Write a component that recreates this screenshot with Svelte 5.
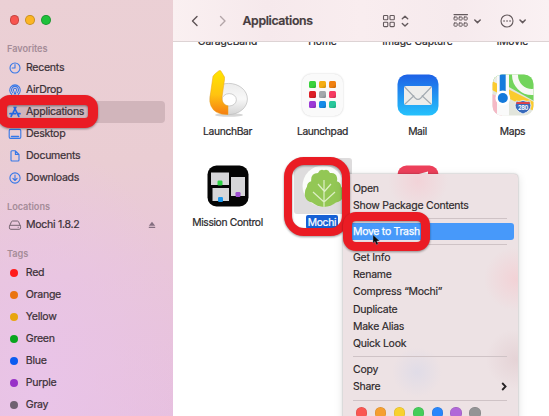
<script>
  const favorites = ['Recents', 'AirDrop', 'Applications', 'Desktop', 'Documents', 'Downloads'];
  const tags = [
    ['Red', '#ff1c1c'], ['Orange', '#ea7311'], ['Yellow', '#e8a50f'], ['Green', '#09a51e'],
    ['Blue', '#0b5cf0'], ['Purple', '#9832c8'], ['Gray', '#706171']
  ];
  const groups = [
    ['Open', 'Show Package Contents'],
    ['Move to Trash'],
    ['Get Info', 'Rename', 'Compress “Mochi”', 'Duplicate', 'Make Alias', 'Quick Look'],
    ['Copy', 'Share']
  ];
  const dots = ['#fa5752', '#f59f31', '#f8d12f', '#45cd5a', '#2986fb', '#b168d8', '#949496'];
  const pad = ['#3ad23c', '#f5ad12', '#f08010', '#dd1f27', '#a3a8ac', '#f53b62', '#9c3ad6', '#168be8', '#28c79b'];
</script>

<div class="window">
  <aside>
    <div class="lights"><i style="background:#f8544f"></i><i style="background:#fcb524"></i><i style="background:#1fc13b"></i></div>
    <h4>Favorites</h4>
    {#each favorites as name}
      <div class="row" class:active={name === 'Applications'}>
        <svg width="14" height="14" viewBox="0 0 14 14" fill="none" stroke="#3678e8" stroke-width="1.1" stroke-linecap="round" stroke-linejoin="round">
          {#if name === 'Recents'}
            <circle cx="7" cy="7" r="5" /><path d="M7 3.6V7H4.2" />
          {:else if name === 'AirDrop'}
            <path d="M3.7 11.3A5.3 5.3 0 1 1 10.3 11.3M4.9 9.7A3.5 3.5 0 1 1 9.1 9.7M5.8 8.2A1.7 1.7 0 1 1 8.2 8.2" /><path d="M7 7.6L5.5 11.6H8.5Z" fill="#3678e8" stroke="none" />
          {:else if name === 'Applications'}
            <path stroke="#2367e2" stroke-width="1.7" d="M6.2 2.3L10.8 11.4M7.8 2.3L5.2 7.4M3.9 9.8L3.1 11.4M2 8.7H7.4M9.6 8.7H12" />
          {:else if name === 'Desktop'}
            <rect x="1.2" y="2.4" width="11.6" height="9" rx="1.3" /><path d="M3.5 9.4H10.5" stroke-width="1.5" />
          {:else if name === 'Documents'}
            <path d="M3 2.8Q3 1.8 4 1.8H7.4L11 5.4V11Q11 12 10 12H4Q3 12 3 11ZM7.4 1.8V5.4H11" />
          {:else}
            <circle cx="7" cy="7" r="5.1" /><path d="M7 4.1V9.4M4.9 7.4L7 9.5L9.1 7.4" />
          {/if}
        </svg>
        <span>{name}</span>
      </div>
    {/each}
    <h4 class="loc">Locations</h4>
    <div class="row">
      <svg width="14" height="14" viewBox="0 0 14 14" fill="none" stroke="#756570" stroke-width="1"><path d="M1.5 8.2L3.5 3.6Q3.8 3 4.5 3H9.5Q10.2 3 10.5 3.6L12.5 8.2" /><rect x="1.4" y="7.3" width="11.2" height="4" rx="1.4" /><path d="M9.7 9.3H10.7" /></svg>
      <span>Mochi 1.8.2</span>
      <svg class="eject" width="8" height="8" viewBox="0 0 8 8" fill="#846f80"><path d="M4 .8L7.2 4.8H.8ZM.8 5.8H7.2V7H.8Z" /></svg>
    </div>
    <h4 class="tg">Tags</h4>
    {#each tags as [name, color]}
      <div class="row"><b class="tag" style="background:{color}"></b><span>{name}</span></div>
    {/each}
  </aside>

  <main>
    <header>
      <svg class="back" width="36" height="12" viewBox="0 0 36 12" fill="none" stroke-width="1.4" stroke-linecap="round" stroke-linejoin="round"><path d="M6 1.5L1.5 6L6 10.5" stroke="#5d5355" /><path d="M29.5 1.5L34 6L29.5 10.5" stroke="#b3a5a8" /></svg>
      <strong>Applications</strong>
      <svg class="tools" width="146" height="16" viewBox="0 0 146 16" fill="none" stroke="#645a5d" stroke-width="1.1" stroke-linecap="round" stroke-linejoin="round">
        <g><rect x="1.5" y="2.5" width="4.3" height="4.3" rx=".8" /><rect x="8" y="2.5" width="4.3" height="4.3" rx=".8" /><rect x="1.5" y="9.3" width="4.3" height="4.3" rx=".8" /><rect x="8" y="9.3" width="4.3" height="4.3" rx=".8" /></g>
        <path stroke-width="1.4" d="M20.3 5.8L23 3.2L25.7 5.8M20.3 10.4L23 13L25.7 10.4" />
        <path d="M72 1.6H85.5" />
        {#each [72, 77, 82] as x}
          <rect {x} y="4" width="3.2" height="3" rx=".7" stroke-width="1" /><rect {x} y="10" width="3.2" height="3.2" rx=".7" stroke-width="1" />
        {/each}
        <path stroke-width="1.5" d="M92.8 7L95.5 9.6L98.2 7M138 7L140.6 9.6L143.2 7" />
        <circle cx="125" cy="8" r="6" /><path d="M122 8H122.1M125 8H125.1M128 8H128.1" stroke-width="1.6" />
      </svg>
    </header>
    <div class="grid">
      <div class="partial"><span>GarageBand</span><span>Home</span><span>Image Capture</span><span>iMovie</span></div>
      <div class="apps">
        <div class="app">
          <svg width="48" height="50" viewBox="0 0 48 50">
            <defs>
              <linearGradient id="bar" x2="0" y2="1"><stop stop-color="#ffe500" /><stop offset=".55" stop-color="#ffc311" /><stop offset="1" stop-color="#f57d12" /></linearGradient>
              <linearGradient id="ring" x2="0" y2="1"><stop stop-color="#ececec" /><stop offset=".5" stop-color="#f8f8f8" /><stop offset="1" stop-color="#d4d4d4" /></linearGradient>
            </defs>
            <ellipse cx="25" cy="47" rx="14" ry="1.8" fill="#bbb" opacity=".6" />
            <path fill="url(#ring)" stroke="#bcbcbc" stroke-width=".7" fill-rule="evenodd" d="M6 31A18.7 15.6 0 0 1 43.4 31A18.7 15.6 0 0 1 6 31ZM18 31.8A7.2 6.2 0 0 0 32.4 31.8A7.2 6.2 0 0 0 18 31.8Z" />
            <path fill="url(#bar)" stroke="#eda117" stroke-width=".5" d="M9 8.2Q10.5 5.8 15 2.7Q16.8 2 17.5 4L20.5 9Q20.7 12 20 15L17.9 30Q18 36.5 24 37.9V46.6Q11 47 7 38Q5.3 34 6 29Z" />
          </svg><span>LaunchBar</span>
        </div>
        <div class="app">
          <div class="pad">{#each pad as c}<i style="background:linear-gradient(145deg,{c},{c} 60%,#0003),{c}"></i>{/each}</div><span>Launchpad</span>
        </div>
        <div class="app">
          <svg width="42" height="42" viewBox="0 0 42 42">
            <defs><linearGradient id="mail" x2="0" y2="1"><stop stop-color="#1e61e6" /><stop offset="1" stop-color="#25c2fc" /></linearGradient></defs>
            <rect x=".5" y=".5" width="41" height="41" rx="9.5" fill="url(#mail)" />
            <rect x="7" y="12" width="28" height="19" rx="2" fill="#ededeb" />
            <path d="M8 30L17.2 21.5M34 30L24.8 21.5M7.7 13L18.2 24Q21 26.8 23.8 24L34.3 13" fill="none" stroke="#a3abb1" stroke-width="1.1" />
          </svg><span>Mail</span>
        </div>
        <div class="app">
          <svg width="42" height="42" viewBox="0 0 42 42">
            <defs><clipPath id="mp"><rect x=".5" y=".5" width="41" height="41" rx="9.5" /></clipPath></defs>
            <g clip-path="url(#mp)">
              <rect width="42" height="42" fill="#e2e5dc" /><path d="M0 20L10 24V42H0Z" fill="#f5b9c6" />
              <path d="M0 0H42V27L15 12L0 9Z" fill="#72d45b" />
              <path d="M0 0H6V12H0Z" fill="#ecece6" />
              <path d="M0 7L42 28V37L0 16Z" fill="#fbcb2e" />
              <circle cx="40" cy="1" r="17" fill="none" stroke="#f7f8f4" stroke-width="6" />
              <path d="M5 0H17V42H5Z" fill="#fafafa" /><path d="M7.7 0H13.7V26H7.7Z" fill="#147bdc" />
            </g>
            <circle cx="10.8" cy="24" r="7.4" fill="#fff" /><circle cx="10.8" cy="24" r="5" fill="#1479db" />
            <path d="M24 27Q27 28 31 26.5Q35 28 38 27Q37.5 29 39 31Q39 37 31 40Q23 37 23 31Q24.5 29 24 27Z" fill="#3769bb" stroke="#f0f2f5" stroke-width=".9" /><path d="M24.6 28H37.5L37.9 30H24.1Z" fill="#d9434c" />
            <text x="31" y="35.8" text-anchor="middle" font-size="5.6" font-weight="700" fill="#fff">280</text>
          </svg><span>Maps</span>
        </div>
        <div class="app">
          <svg class="mission" width="42" height="42" viewBox="0 0 42 42">
            <rect x=".5" y=".5" width="41" height="41" rx="9" fill="#050505" />
            <path fill="#d6d6d8" d="M4 7.5H22V20H4ZM24 12H38V31H24ZM5.5 23H22V36H5.5Z" />
            <rect x="10.5" y="15.5" width="5" height="5" rx="1.2" fill="#2bd343" /><rect x="28.5" y="27" width="5" height="5" rx="1.2" fill="#a050d1" /><rect x="11" y="32" width="5" height="5" rx="1.2" fill="#1996ec" />
          </svg><span>Mission Control</span>
        </div>
        <div class="app">
          <div class="picked">
            <svg width="42" height="42" viewBox="0 0 42 42">
              <circle cx="21" cy="21" r="20.5" fill="#fbfcfa" />
              <path fill="#93c755" d="M22 5.3Q26 3.7 28 8Q34 7.3 35 12.5Q35.5 15 34.8 16.3Q39 17.5 39 21.5Q42.5 25 42 31Q39.5 36.5 34 37.5Q29 41.5 22 42Q15 41.5 10 37.5Q4.5 36.5 3 31.5Q2 26 5 21.5Q5 17.5 9.2 16.3Q8.5 8 16 8Q18 3.7 22 5.3Z" />
              <path d="M22 15V42M22 26L16 19M22 27L29 19M22 37L11 27M22 37L33 27" fill="none" stroke="#ddefc5" stroke-width="1.2" />
            </svg>
          </div><span class="chosen">Mochi</span>
        </div>
        <div class="app music">
          <svg width="42" height="42" viewBox="0 0 42 42"><rect x=".5" y=".5" width="41" height="41" rx="9" fill="#ed405b" /><path d="M20 9.5L31 6.5V30H28V12L23 14V32H20Z" fill="#fff" /></svg>
        </div>
      </div>
    </div>
  </main>

  <div class="menu">
    {#each groups as group, g}
      {#if g > 0}<hr />{/if}
      {#each group as item}
        <div class="item" class:hot={item === 'Move to Trash'}>
          {item}
          {#if item === 'Share'}<svg width="6" height="9" viewBox="0 0 6 9" fill="none" stroke="#262224" stroke-width="1.8"><path d="M1.2 1L4.6 4.5L1.2 8" /></svg>{/if}
        </div>
      {/each}
    {/each}
    <hr />
    <div class="dots">{#each dots as c}<i style="background:{c}"></i>{/each}</div>
  </div>

  <div class="mark m1"></div>
  <div class="mark m2"></div>
  <div class="mark m3"></div>
  <svg class="cursor" width="9" height="12" viewBox="0 0 9 12"><path d="M1 .8V9.2L3 7.5L4.4 10.8L6.2 10L4.8 6.9H7.5Z" fill="#080808" stroke="#8ba4c0" stroke-width=".4" /></svg>
</div>

<style>
  .window { position: relative; display: flex; width: 549px; height: 416px; overflow: hidden; background: #fff; font-family: Inter, "Liberation Sans", sans-serif; font-size: 10.6px; color: #3b3037; }
  aside { box-sizing: border-box; flex: none; width: 173px; height: 416px; padding: 15px 8px 0 7px; background: radial-gradient(ellipse 150px 250px at 40px 390px, #e9c4e8 0, #e9c4e600 100%), linear-gradient(175deg, #ebd0d5 0, #eacdd3 40%, #e9c6da 65%, #e7c0df 100%); }
  .lights { display: flex; gap: 6px; height: 11px; padding-left: 2.5px; }
  .lights i { box-sizing: border-box; width: 9.8px; height: 9.8px; border-radius: 50%; border: .5px solid #0003; }
  h4 { margin: 15px 0 0; height: 15px; line-height: 15px; font-size: 9.2px; font-weight: 600; color: #a58c98; letter-spacing: -.05px; }
  .row { display: flex; align-items: center; height: 22px; line-height: 22px; letter-spacing: -.3px; }
  h4 + .row { margin-top: 1px; }
  .row > svg:first-child { margin-left: 1px; margin-right: 4px; flex: none; }
  .row span { -webkit-text-stroke: .2px #3b3037; }
  .active { background: #d1b5bb; border-radius: 4px; }
  h4.loc { margin-top: 10px; }
  h4.loc + .row { margin-top: 0; }
  h4.tg { margin-top: 10px; }
  h4.tg + .row { margin-top: 1px; }
  .eject { margin-left: auto; margin-right: 9px; }
  .tag { width: 8px; height: 8px; border-radius: 50%; margin: 0 7.5px 0 3.3px; }
  main { flex: 1; min-width: 0; }
  header { box-sizing: border-box; display: flex; align-items: center; height: 42px; border-bottom: 1px solid #ddd3d4; background: linear-gradient(90deg, #faf0f1, #f6e9ec 25%, #f9edef 50%, #f6eaed 75%, #faf1f3); }
  .back { flex: none; margin: 0 16px 0 17.5px; }
  .tools { flex: none; }
  strong { flex: none; width: 139.5px; font-size: 12.3px; font-weight: 600; letter-spacing: -.36px; color: #463c3f; -webkit-text-stroke: .2px; }
  .grid { color: #29272a; font-size: 10.3px; letter-spacing: -.35px; }
  .partial, .apps { display: grid; grid-template-columns: repeat(4, 95px); margin-left: 7px; text-align: center; }
  .partial { height: 5.5px; overflow: hidden; line-height: 12px; letter-spacing: -.1px; }
  .partial span { margin-top: -7.5px; -webkit-text-stroke: .2px #29272a; }
  .apps { grid-auto-rows: 91px; padding-top: 20px; }
  .app { display: flex; flex-direction: column; align-items: center; height: 91px; padding-top: 6px; box-sizing: border-box; }
  .app > svg { height: 42px; width: auto; overflow: visible; flex: none; }
  .app:first-child > svg { width: 48px; height: 50px; margin: -6px 0 -2px; }
  .app > span { margin-top: 8.5px; height: 14px; line-height: 14px; white-space: nowrap; -webkit-text-stroke: .2px; }
  .pad { flex: none; box-sizing: border-box; display: grid; grid-template-columns: repeat(3, 7px); grid-auto-rows: 7px; gap: 3px; width: 41px; height: 42px; padding: 7.5px 7px; border-radius: 9px; background: #fafafa; box-shadow: 0 0 2px #ccc; }
  .pad i { border-radius: 1.5px; }
  .picked { flex: none; padding: 7px 8px; margin: -7px; background: #dedcdd; border-radius: 3px; }
  .picked svg { display: block; }
  .app > .chosen { position: relative; left: -.5px; background: #1761d5; color: #fff; border-radius: 2px; padding: 0 2px; letter-spacing: -.25px; }
  .menu { position: absolute; left: 343px; top: 174px; width: 175px; height: 250px; box-sizing: border-box; padding: 5.6px 4px 0 4px; border-radius: 4px; background: radial-gradient(circle at 75px 7px, #f2d3d8 0, #f2d3d800 30px), radial-gradient(circle at 173px 105px, #f2d2d6 0, #f2d2d600 32px), radial-gradient(circle at 74px 198px, #e0dce7 0, #e0dce700 25px), radial-gradient(circle at 173px 185px, #e5d3d6 0, #e5d3d600 30px), #ede2e4; box-shadow: 0 0 2px #0005, 0 2px 10px #0002; color: #2b2628; font-size: 10.5px; }
  .item { display: flex; align-items: center; justify-content: space-between; height: 17.3px; line-height: 17.3px; padding: 0 7px 0 6px; border-radius: 3px; letter-spacing: -.26px; -webkit-text-stroke: .15px; }
  .hot { background: #4799fa; color: #fff; -webkit-text-stroke: .25px; letter-spacing: -.3px; }
  hr { height: 1px; border: 0; margin: 4px 7px 3.6px 6px; background: #cfc3c6; }
  .dots { display: flex; gap: 7.6px; padding: 3px 0 0 9px; }
  .dots i { width: 11.3px; height: 11.3px; border-radius: 50%; box-shadow: inset 0 0 0 .5px #0002; }
  .mark { position: absolute; box-sizing: border-box; border: 10px solid #ea1c24; filter: drop-shadow(0 1px 1px #0006); }
  .m1 { left: -3px; top: 95px; width: 101px; height: 33px; border-radius: 13px; }
  .m2 { left: 284px; top: 157px; width: 66px; height: 79px; border-width: 8.5px; border-radius: 20px; }
  .m3 { left: 343px; top: 212px; width: 87px; height: 39px; border-width: 9px; border-radius: 13px; }
  .cursor { position: absolute; left: 372px; top: 234px; }
</style>
